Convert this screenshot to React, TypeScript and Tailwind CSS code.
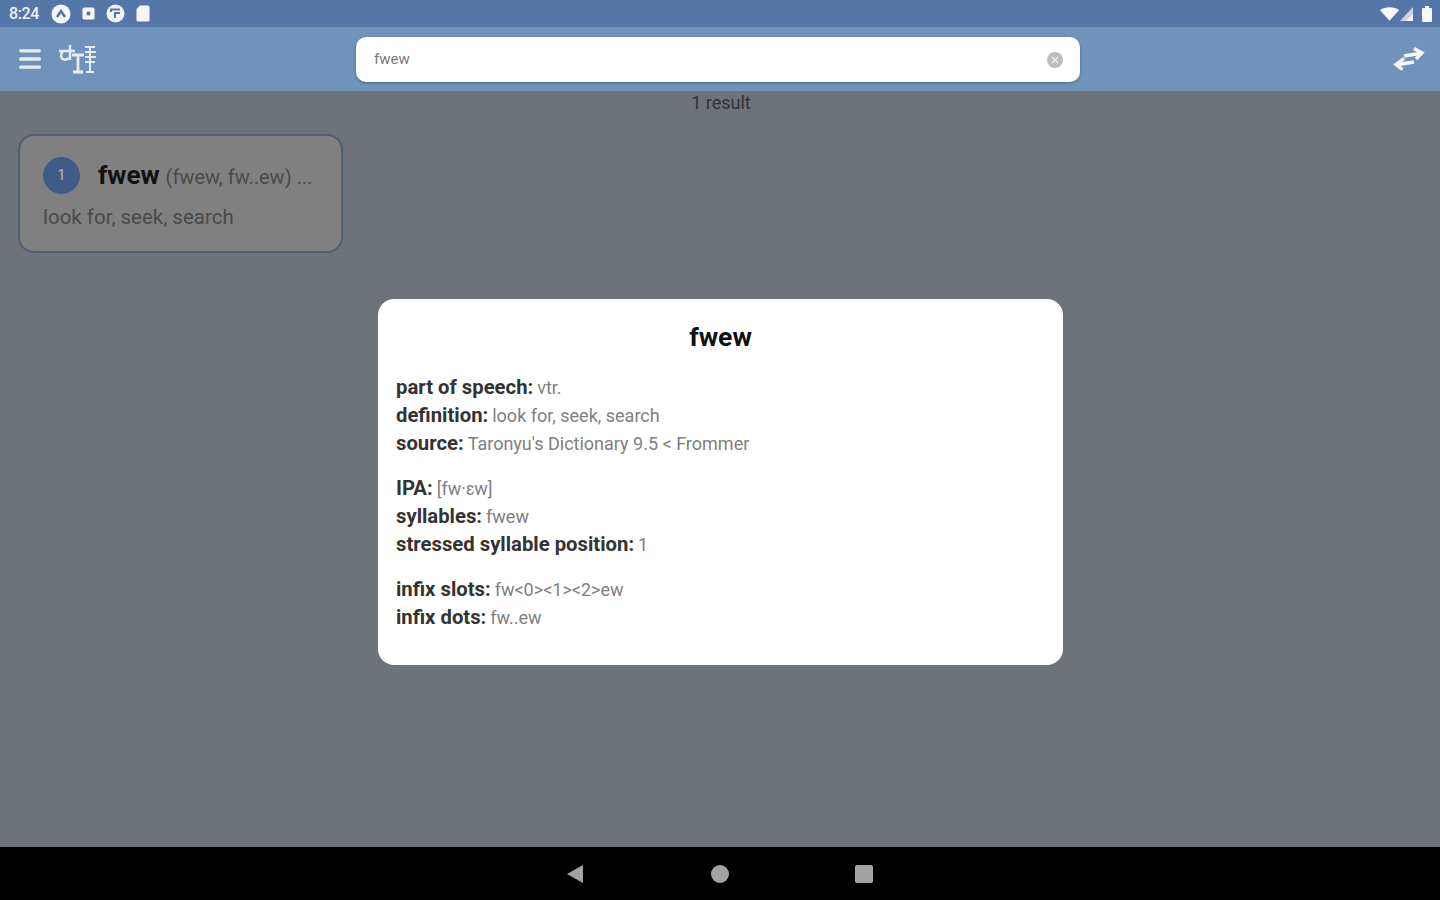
import React from 'react';
import { Menu } from 'lucide-react';

type Field = { label: string; value: string };

const groups: { fields: Field[]; className: string }[] = [
  {
    className: 'mt-[20px]',
    fields: [
      { label: 'part of speech:', value: 'vtr.' },
      { label: 'definition:', value: 'look for, seek, search' },
      { label: 'source:', value: "Taronyu's Dictionary 9.5 < Frommer" },
    ],
  },
  {
    className: 'mt-[17px]',
    fields: [
      { label: 'IPA:', value: '[fw·ɛw]' },
      { label: 'syllables:', value: 'fwew' },
      { label: 'stressed syllable position:', value: '1' },
    ],
  },
  {
    className: 'mt-[17px]',
    fields: [
      { label: 'infix slots:', value: 'fw<0><1><2>ew' },
      { label: 'infix dots:', value: 'fw..ew' },
    ],
  },
];

const StatusIcons = () => (
  <div className="flex items-center ml-[12px]">
    <svg width="20" height="20" viewBox="0 0 20 20">
      <circle cx="10" cy="10" r="9.5" fill="#f4f6fa" />
      <path d="M6 13 L10 7 L14 13" fill="none" stroke="#5477a8" strokeWidth="2.5" />
    </svg>
    <svg width="13" height="13" viewBox="0 0 14 14" className="ml-[11px]">
      <rect x="0.5" y="0.5" width="13" height="13" rx="2" fill="#f4f6fa" />
      <rect x="5" y="5" width="4" height="4" fill="#5477a8" />
    </svg>
    <svg width="19" height="19" viewBox="0 0 19 19" className="ml-[11px]">
      <circle cx="9.5" cy="9.5" r="9" fill="#f0f2f6" />
      <path d="M5 8 V5.5 H14 M9 14 V9 H14" fill="none" stroke="#5477a8" strokeWidth="2" />
    </svg>
    <svg width="14" height="17" viewBox="0 0 14 17" className="ml-[11px]">
      <path d="M4 0.5 H12 A1.5 1.5 0 0 1 13.5 2 V15 A1.5 1.5 0 0 1 12 16.5 H2 A1.5 1.5 0 0 1 0.5 15 V4 Z" fill="#f4f6fa" />
    </svg>
  </div>
);

const Logo = () => (
  <svg width="40" height="32" viewBox="0 0 40 32" fill="none" stroke="#e6ecf3" className="ml-[14px]">
    <path d="M1 8 H17 M5 8 C0 15 6 19 11 15 M12 2 V17" strokeWidth="2.4" />
    <path d="M14 12 H26 M20 12 V29 M15 29 H25" strokeWidth="2.8" />
    <path d="M27 4 H37 M27 9 H38 M27 14 H38 M27 19 H37 M32 3 V29 M28 29 H36" strokeWidth="2" />
  </svg>
);

const SwapArrows = () => (
  <svg width="32" height="24" viewBox="0 0 32 24" fill="none" stroke="#f4f6fa" strokeWidth="3.4" className="ml-auto">
    <path d="M11 9 L27 6.5" />
    <path d="M21 1.5 L29 6 L23 12" />
    <path d="M21 15 L5 17.5" />
    <path d="M11 11.5 L3 17.5 L9.5 22.5" />
  </svg>
);

export default function App() {
  return (
    <div className="relative w-[1440px] h-[900px] overflow-hidden flex flex-col bg-[#6e7279] font-['Roboto',sans-serif]">
      <div className="h-[27px] bg-[#5477a8] flex items-center justify-between pl-[9px] pr-[8px]">
        <div className="flex items-center">
          <span className="text-[16px] font-medium text-[#eef1f6] tracking-[-0.4px]">8:24</span>
          <StatusIcons />
        </div>
        <div className="flex items-center gap-[1px]">
          <svg width="19" height="14" viewBox="0 0 20 14">
            <path d="M0 3 C5 -1 15 -1 20 3 L10 14 Z" fill="#f6f8fb" />
          </svg>
          <svg width="14" height="14" viewBox="0 0 14 14">
            <path d="M0 14 L13 0 V14 Z" fill="#c9d5e5" />
            <path d="M6 14 L13 7 V14 Z" fill="#f6f8fb" />
          </svg>
          <svg width="10" height="16" viewBox="0 0 10 16" className="ml-[7px]">
            <path d="M3 0 H7 V2 H9 A1 1 0 0 1 10 3 V15 A1 1 0 0 1 9 16 H1 A1 1 0 0 1 0 15 V3 A1 1 0 0 1 1 2 H3 Z" fill="#f6f8fb" />
          </svg>
        </div>
      </div>

      <div className="h-[64px] bg-[#7093bb] flex items-center pl-[16px] pr-[15px]">
        <Menu className="w-[28px] h-[28px] text-[#e6ecf3]" strokeWidth={2.8} />
        <Logo />
        <div className="ml-[258px] w-[724px] h-[45px] bg-white rounded-[10px] shadow-[0_1px_3px_rgba(0,0,0,0.3)] flex items-center justify-between pl-[18px] pr-[16px]">
          <span className="text-[15px] text-[#777] mt-[1px]">fwew</span>
          <svg width="18" height="18" viewBox="0 0 18 18" className="mt-[1px]">
            <circle cx="9" cy="9" r="8" fill="#bdbdbd" />
            <path d="M6 6 L12 12 M12 6 L6 12" stroke="#e8e8e8" strokeWidth="1.6" />
          </svg>
        </div>
        <SwapArrows />
      </div>

      <div className="flex-1 flex flex-col">
        <p className="text-center text-[18px] leading-[24px] text-[#2f3236] pl-[2px]">1 result</p>
        <div className="ml-[18px] mt-[19px] w-[325px] h-[119px] rounded-[16px] border-2 border-[#4f5e72] bg-[#808080] pl-[23px] pt-[20px]">
          <div className="flex items-center">
            <div className="w-[37px] h-[37px] rounded-full bg-[#3e5c87] flex items-center justify-center text-[15px] text-[#b5b9be]">1</div>
            <span className="ml-[18px] text-[26px] font-bold text-[#111]">fwew</span>
            <span className="ml-[6px] text-[20px] text-[#4a4a4a] mt-[2px] whitespace-nowrap">(fwew, fw..ew) ...</span>
          </div>
          <p className="mt-[10px] text-[20.5px] leading-[24px] text-[#4a4a4a] whitespace-nowrap">look for, seek, search</p>
        </div>
      </div>

      <div className="h-[53px] bg-black flex items-center justify-center pr-[1px]">
        <svg width="18" height="20" viewBox="0 0 18 20" className="mr-[127px]">
          <path d="M17 1 V19 L1 10 Z" fill="#a3a3a3" />
        </svg>
        <div className="w-[18px] h-[18px] rounded-full bg-[#a3a3a3]" />
        <div className="ml-[126px] w-[18px] h-[18px] rounded-[2px] bg-[#a3a3a3]" />
      </div>

      <div className="absolute left-[378px] top-[299px] w-[685px] h-[366px] bg-white rounded-[16px] pl-[18px] pt-[22px]">
        <h2 className="text-center text-[26.5px] leading-[32px] font-bold text-[#111] pr-[18px]">fwew</h2>
        {groups.map((group, i) => (
          <div key={i} className={group.className}>
            {group.fields.map((field) => (
              <p key={field.label} className="h-[28px] leading-[28px] whitespace-nowrap">
                <span className="text-[20.3px] font-bold text-[#333]">{field.label}</span>{' '}
                <span className="text-[18px] text-[#808080]">{field.value}</span>
              </p>
            ))}
          </div>
        ))}
      </div>
    </div>
  );
}
